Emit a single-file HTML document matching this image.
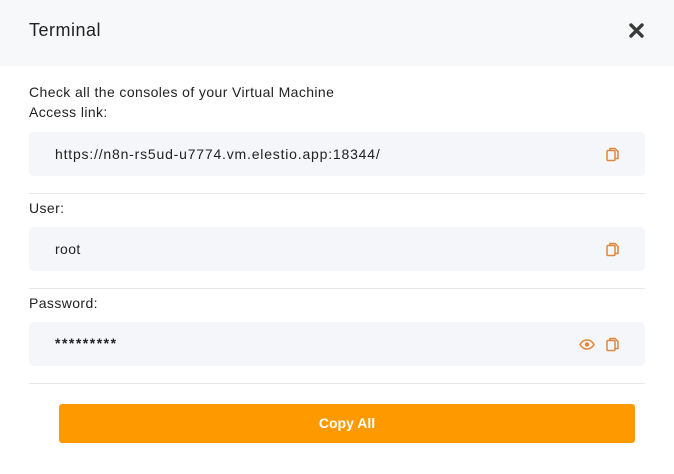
<!DOCTYPE html><html><head><style>
body{margin:0;width:674px;height:474px;background:#fff;font-family:"Liberation Sans",sans-serif;color:#222;position:relative;overflow:hidden}
.a{position:absolute}
.hdr{left:0;top:0;width:674px;height:66px;background:#f7f8fa}
.t{font-size:14px;letter-spacing:0.4px}
.box{left:29px;width:616px;height:44px;background:#f5f6f9;border-radius:5px}
.box span{position:absolute;left:26px;top:14px;font-size:14px;color:#222;letter-spacing:0.8px}
.hr{left:29px;width:616px;height:1px;background:#e6e8ec}
.ic{position:absolute;top:15px}
</style></head><body>
<div class="a hdr"></div>
<div class="a" style="left:29px;top:20px;font-size:18px;letter-spacing:0.5px;color:#222">Terminal</div>
<svg class="a" style="left:629px;top:23px" width="15" height="15" viewBox="0 0 15 15"><path d="M2 2L13 13M13 2L2 13" stroke="#3a3a3a" stroke-width="3.4" stroke-linecap="round"/></svg>
<div class="a t" style="left:29px;top:84px">Check all the consoles of your Virtual Machine</div>
<div class="a t" style="left:29px;top:104px">Access link:</div>
<div class="a box" style="top:132px"><span>https://n8n-rs5ud-u7774.vm.elestio.app:18344/</span>
<svg class="ic" style="left:577px" width="14" height="15" viewBox="0 0 14 15"><rect x="1" y="3.5" width="8" height="10" rx="1" fill="none" stroke="#e0873a" stroke-width="1.5"/><path d="M4 3.5V1.5h5l3 3v7h-3" fill="none" stroke="#e0873a" stroke-width="1.5"/></svg></div>
<div class="a hr" style="top:193px"></div>
<div class="a t" style="left:29px;top:200px">User:</div>
<div class="a box" style="top:227px"><span style="letter-spacing:0.4px">root</span>
<svg class="ic" style="left:577px" width="14" height="15" viewBox="0 0 14 15"><rect x="1" y="3.5" width="8" height="10" rx="1" fill="none" stroke="#e0873a" stroke-width="1.5"/><path d="M4 3.5V1.5h5l3 3v7h-3" fill="none" stroke="#e0873a" stroke-width="1.5"/></svg></div>
<div class="a hr" style="top:288px"></div>
<div class="a t" style="left:29px;top:295px">Password:</div>
<div class="a box" style="top:322px"><span style="top:13px;font-weight:bold;letter-spacing:1.5px">*********</span>
<svg class="ic" style="left:550px;top:17px" width="16" height="11" viewBox="0 0 16 11"><path d="M1 5.5C3 2 5.5 1 8 1s5 1 7 4.5C13 9 10.5 10 8 10S3 9 1 5.5z" fill="none" stroke="#e0873a" stroke-width="1.5"/><circle cx="8" cy="5.5" r="2.2" fill="#e0873a"/></svg>
<svg class="ic" style="left:577px" width="14" height="15" viewBox="0 0 14 15"><rect x="1" y="3.5" width="8" height="10" rx="1" fill="none" stroke="#e0873a" stroke-width="1.5"/><path d="M4 3.5V1.5h5l3 3v7h-3" fill="none" stroke="#e0873a" stroke-width="1.5"/></svg></div>
<div class="a hr" style="top:383px"></div>
<div class="a" style="left:59px;top:404px;width:576px;height:39px;background:#ff9900;border-radius:3px;color:#fff;font-weight:bold;font-size:14px;text-align:center;line-height:39px">Copy All</div>
</body></html>
